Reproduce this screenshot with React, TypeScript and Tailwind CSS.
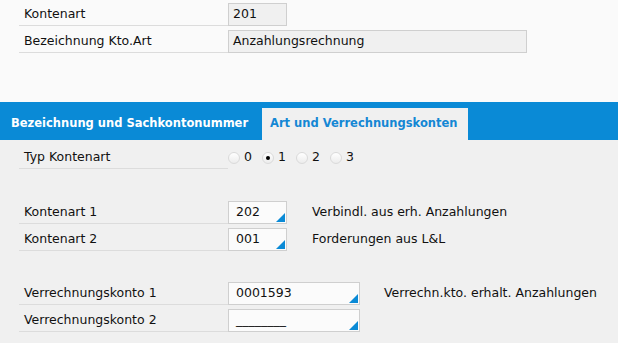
const FONT = "font-['DejaVu_Sans',sans-serif]";

function Label({ text }: { text: string }) {
  return (
    <div className="ml-[19px] w-[209px] h-full pl-[5px] border-b border-[#dcdcdc] flex items-center">
      {text}
    </div>
  );
}

function Corner() {
  return (
    <svg className="absolute right-[1px] bottom-[1px]" width="9" height="9" viewBox="0 0 9 9">
      <polygon points="9,0 9,9 0,9" fill="#0a8ad6" />
    </svg>
  );
}

function ReadField({ value, w }: { value: string; w: string }) {
  return (
    <div className={`${w} h-full border border-[#cfcfcf] bg-[#f0f0f0] pl-[4px] flex items-center`}>
      {value}
    </div>
  );
}

function EditField({ value, w }: { value: string; w: string }) {
  return (
    <div className={`relative ${w} h-full border border-[#cfcfcf] bg-[#fbfbfb] pl-[7px] flex items-center`}>
      {value}
      <Corner />
    </div>
  );
}

function Radio({ label, checked }: { label: string; checked?: boolean }) {
  return (
    <div className="flex items-center">
      <span className="w-[12px] h-[12px] rounded-full border border-[#dadada] bg-gradient-to-b from-[#ffffff] to-[#ececec] flex items-center justify-center">
        {checked && <span className="w-[4px] h-[4px] rounded-full bg-black" />}
      </span>
      <span className="ml-[4px] w-[18px]">{label}</span>
    </div>
  );
}

export default function App() {
  return (
    <div className={`${FONT} text-[12.5px] text-[#111] w-[618px] h-[343px] bg-[#f0f0f0] overflow-hidden`}>
      {/* Kopf */}
      <div className="h-[102px] bg-[#fafafa] pt-[3px] flex flex-col gap-[4px]">
        <div className="flex h-[23px]">
          <Label text="Kontenart" />
          <ReadField value="201" w="w-[59px]" />
        </div>
        <div className="flex h-[23px]">
          <Label text="Bezeichnung Kto.Art" />
          <ReadField value="Anzahlungsrechnung" w="w-[299px]" />
        </div>
      </div>

      {/* Tabs */}
      <div className="h-[38px] bg-[#0a8ad6] flex items-end font-bold text-[11.5px] whitespace-nowrap">
        <div className="w-[262px] shrink-0 h-[32px] pl-[11px] flex items-center text-white">
          Bezeichnung und Sachkontonummer
        </div>
        <div className="w-[206px] shrink-0 h-[32px] px-[8px] bg-[#f0f0f0] text-[#1487d4] flex items-center">
          Art und Verrechnungskonten
        </div>
      </div>

      {/* Inhalt */}
      <div className="pt-[6px]">
        <div className="flex h-[23px]">
          <Label text="Typ Kontenart" />
          <div className="flex items-center">
            <Radio label="0" />
            <Radio label="1" checked />
            <Radio label="2" />
            <Radio label="3" />
          </div>
        </div>

        <div className="mt-[32px] flex flex-col gap-[4px]">
          <div className="flex h-[23px]">
            <Label text="Kontenart 1" />
            <EditField value="202" w="w-[59px]" />
            <div className="ml-[25px] flex items-center">Verbindl. aus erh. Anzahlungen</div>
          </div>
          <div className="flex h-[23px]">
            <Label text="Kontenart 2" />
            <EditField value="001" w="w-[59px]" />
            <div className="ml-[25px] flex items-center">Forderungen aus L&amp;L</div>
          </div>
        </div>

        <div className="mt-[31px] flex flex-col gap-[4px]">
          <div className="flex h-[23px]">
            <Label text="Verrechnungskonto 1" />
            <EditField value="0001593" w="w-[132px]" />
            <div className="ml-[24px] flex items-center">Verrechn.kto. erhalt. Anzahlungen</div>
          </div>
          <div className="flex h-[23px]">
            <Label text="Verrechnungskonto 2" />
            <EditField value="________" w="w-[132px]" />
          </div>
        </div>
      </div>
    </div>
  );
}
